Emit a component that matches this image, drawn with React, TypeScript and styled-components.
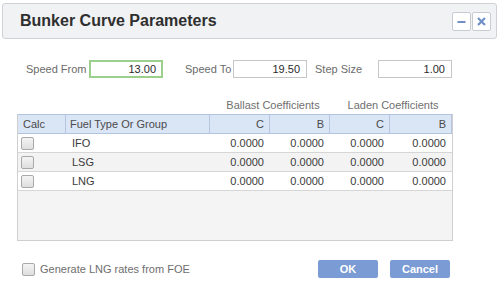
import React from 'react';
import styled, { createGlobalStyle } from 'styled-components';

const GlobalStyle = createGlobalStyle`
  html, body {
    margin: 0;
    padding: 0;
    background: #ffffff;
    font-family: "Liberation Sans", Arial, sans-serif;
  }
`;

const Dialog = styled.div`
  width: 500px;
  height: 303px;
  background: #ffffff;
  padding: 3px 3px 0 2px;
  box-sizing: border-box;
`;

const Header = styled.div`
  height: 36px;
  border: 1px solid #cfd2d6;
  border-radius: 3px;
  background: #f1f2f4;
  display: flex;
  align-items: center;
  justify-content: space-between;
  padding: 0 5px 0 17px;
  box-sizing: border-box;
`;

const Title = styled.h1`
  margin: 0;
  font-size: 16px;
  font-weight: bold;
  color: #2f2f2f;
`;

const HeaderButtons = styled.div`
  display: flex;
  gap: 1px;
`;

const IconButton = styled.button`
  width: 19px;
  height: 19px;
  padding: 0;
  border: 1px solid #c8ccd2;
  border-radius: 2px;
  background: #ffffff;
  display: flex;
  align-items: center;
  justify-content: center;
`;

const Body = styled.div`
  padding: 21px 0 0 15px;
`;

const ParamRow = styled.div`
  display: flex;
  align-items: center;
  height: 18px;
  padding-left: 9px;
`;

const ParamLabel = styled.label<{ $width: number }>`
  width: ${({ $width }) => $width}px;
  flex-shrink: 0;
  font-size: 11px;
  color: #6b6b6b;
`;

const ParamInput = styled.div<{ $active?: boolean; $gap: number }>`
  width: 74px;
  height: 18px;
  box-sizing: border-box;
  border: ${({ $active }) => ($active ? '2px solid #9bcf8b' : '1px solid #c6c6c6')};
  font-size: 11px;
  color: #2b2b2b;
  text-align: right;
  line-height: ${({ $active }) => ($active ? 14 : 16)}px;
  padding-right: ${({ $active }) => ($active ? 5 : 6)}px;
  margin-right: ${({ $gap }) => $gap}px;
`;

const GroupRow = styled.div`
  display: flex;
  margin-top: 19px;
  height: 17px;
  padding-left: 196px;
`;

const GroupLabel = styled.div`
  width: 120px;
  text-align: center;
  font-size: 11px;
  color: #707070;
  line-height: 17px;
`;

const Table = styled.div`
  width: 436px;
  height: 127px;
  border: 1px solid #cfcfcf;
  border-top: 1px solid #b5c4de;
  background: #f4f4f4;
  box-sizing: border-box;
`;

const Grid = styled.div`
  display: grid;
  grid-template-columns: 48px 144px 60px 60px 60px 1fr;
`;

const HeadCell = styled.div<{ $right?: boolean }>`
  height: 18px;
  line-height: 18px;
  background: #dae5f6;
  border-right: 1px solid #b7c6e0;
  border-bottom: 1px solid #b5c4de;
  font-size: 11px;
  color: #4a4a4a;
  padding: 0 5px 0 4px;
  text-align: ${({ $right }) => ($right ? 'right' : 'left')};
  &:first-child {
    padding-left: 5px;
  }
  &:last-child {
    border-right: none;
  }
`;

const Cell = styled.div<{ $right?: boolean; $alt?: boolean }>`
  height: 18px;
  background: ${({ $alt }) => ($alt ? '#f3f3f3' : '#ffffff')};
  border-bottom: 1px solid #d6d6d6;
  font-size: 11px;
  color: #3a3a3a;
  padding: 0 6px;
  display: flex;
  align-items: center;
  justify-content: ${({ $right }) => ($right ? 'flex-end' : 'flex-start')};
`;

const CalcCell = styled(Cell)`
  padding-left: 3px;
`;

const Box = styled.span`
  width: 11px;
  height: 11px;
  border: 1px solid #a9a9a9;
  border-radius: 2px;
  background: linear-gradient(#f4f4f4, #dedede);
  display: inline-block;
  box-sizing: content-box;
  flex-shrink: 0;
`;

const Footer = styled.div`
  display: flex;
  align-items: center;
  margin-top: 19px;
  padding-left: 5px;
  width: 433px;
  box-sizing: border-box;
`;

const CheckLabel = styled.label`
  display: flex;
  align-items: center;
  gap: 5px;
  font-size: 11px;
  color: #6e6e6e;
  flex: 1;
`;

const Button = styled.button`
  width: 60px;
  height: 18px;
  border: none;
  border-radius: 2px;
  background: #7a9bd3;
  color: #ffffff;
  font-family: "Liberation Sans", Arial, sans-serif;
  font-size: 11px;
  font-weight: bold;
  padding: 0;
  margin-left: 12px;
`;

const rows = [
  { fuel: 'IFO', alt: false },
  { fuel: 'LSG', alt: true },
  { fuel: 'LNG', alt: false },
];

const App: React.FC = () => {
  return (
    <>
      <GlobalStyle />
      <Dialog>
        <Header>
          <Title>Bunker Curve Parameters</Title>
          <HeaderButtons>
            <IconButton aria-label="minimize">
              <svg width="9" height="9" viewBox="0 0 9 9">
                <rect x="0.5" y="4" width="8" height="2" fill="#6f8fc6" />
              </svg>
            </IconButton>
            <IconButton aria-label="close">
              <svg width="9" height="9" viewBox="0 0 9 9">
                <path d="M1 1 L8 8 M8 1 L1 8" stroke="#6f8fc6" strokeWidth="2.2" />
              </svg>
            </IconButton>
          </HeaderButtons>
        </Header>
        <Body>
          <ParamRow>
            <ParamLabel $width={63}>Speed From</ParamLabel>
            <ParamInput $active $gap={22}>13.00</ParamInput>
            <ParamLabel $width={48}>Speed To</ParamLabel>
            <ParamInput $gap={8}>19.50</ParamInput>
            <ParamLabel $width={63}>Step Size</ParamLabel>
            <ParamInput $gap={0}>1.00</ParamInput>
          </ParamRow>
          <GroupRow>
            <GroupLabel>Ballast Coefficients</GroupLabel>
            <GroupLabel>Laden Coefficients</GroupLabel>
          </GroupRow>
          <Table>
            <Grid>
              <HeadCell>Calc</HeadCell>
              <HeadCell>Fuel Type Or Group</HeadCell>
              <HeadCell $right>C</HeadCell>
              <HeadCell $right>B</HeadCell>
              <HeadCell $right>C</HeadCell>
              <HeadCell $right>B</HeadCell>
              {rows.map((r) => (
                <React.Fragment key={r.fuel}>
                  <CalcCell $alt={r.alt}>
                    <Box />
                  </CalcCell>
                  <Cell $alt={r.alt}>{r.fuel}</Cell>
                  <Cell $alt={r.alt} $right>0.0000</Cell>
                  <Cell $alt={r.alt} $right>0.0000</Cell>
                  <Cell $alt={r.alt} $right>0.0000</Cell>
                  <Cell $alt={r.alt} $right>0.0000</Cell>
                </React.Fragment>
              ))}
            </Grid>
          </Table>
          <Footer>
            <CheckLabel>
              <Box />
              Generate LNG rates from FOE
            </CheckLabel>
            <Button>OK</Button>
            <Button>Cancel</Button>
          </Footer>
        </Body>
      </Dialog>
    </>
  );
};

export default App;
